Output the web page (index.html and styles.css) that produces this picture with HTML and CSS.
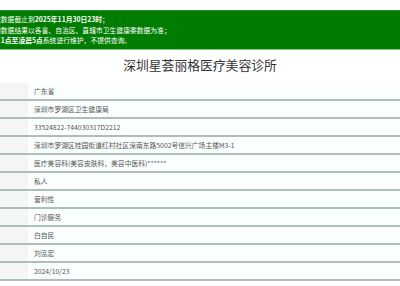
FILE: index.html
```
<!DOCTYPE html>
<html lang="zh-CN">
<head>
<meta charset="utf-8">
<title>深圳星荟丽格医疗美容诊所</title>
<link rel="stylesheet" href="styles.css">
</head>
<body>
<div class="page">
  <div class="notice">
    <div class="notice-line">统数据截止到<b>2025年11月30日23时</b>；</div>
    <div class="notice-line">的数据结果以各省、自治区、直辖市卫生健康委数据为准；</div>
    <div class="notice-line">日<b>1点至凌晨5点</b>系统进行维护，不提供查询。</div>
  </div>
  <h1 class="title">深圳星荟丽格医疗美容诊所</h1>
  <div class="table">
    <div class="row"><div class="label"></div><div class="value">广东省</div></div>
    <div class="row"><div class="label"></div><div class="value">深圳市罗湖区卫生健康局</div></div>
    <div class="row"><div class="label"></div><div class="value">33524822-744030317D2212</div></div>
    <div class="row"><div class="label"></div><div class="value">深圳市罗湖区桂园街道红村社区深南东路5002号信兴广场主楼M3-1</div></div>
    <div class="row"><div class="label"></div><div class="value">医疗美容科(美容皮肤科，美容中医科)******</div></div>
    <div class="row"><div class="label"></div><div class="value">私人</div></div>
    <div class="row"><div class="label"></div><div class="value">营利性</div></div>
    <div class="row"><div class="label"></div><div class="value">门诊服务</div></div>
    <div class="row"><div class="label"></div><div class="value">白自民</div></div>
    <div class="row"><div class="label"></div><div class="value">刘泓宏</div></div>
    <div class="row"><div class="label"></div><div class="value">2024/10/23</div></div>
  </div>
</div>
</body>
</html>
```
FILE: styles.css
```
html, body {
  margin: 0;
  padding: 0;
  background: #ffffff;
  overflow: hidden;
}
body {
  font-family: "Noto Sans CJK SC", "Noto Sans", sans-serif;
}
.page {
  padding-top: 10px;
}
.notice {
  background: #007d00;
  height: 40px;
  box-sizing: border-box;
  padding: 3px 0 0 0;
  border-top: 1px solid #2b8f2b;
  border-bottom: 1px solid #86c886;
  color: #ffffff;
  font-size: 6.8px;
  line-height: 10.5px;
  overflow: hidden;
}
.notice-line {
  margin-left: -6px;
  white-space: nowrap;
}
.notice-line b {
  font-weight: bold;
}
.title {
  margin: 0;
  height: 33px;
  line-height: 30px;
  text-align: center;
  font-size: 12.8px;
  font-weight: normal;
  color: #333333;
}
.table {
  display: flex;
  flex-direction: column;
}
.row {
  display: flex;
  height: 18px;
  box-sizing: border-box;
  border-bottom: 2px solid #aebfb8;
}
.label {
  width: 28px;
  background: #f4f5f5;
}
.value {
  flex: 1;
  background: #fbfefe;
  padding-left: 6px;
  font-size: 6.8px;
  line-height: 16px;
  color: #555555;
  white-space: nowrap;
}
```
